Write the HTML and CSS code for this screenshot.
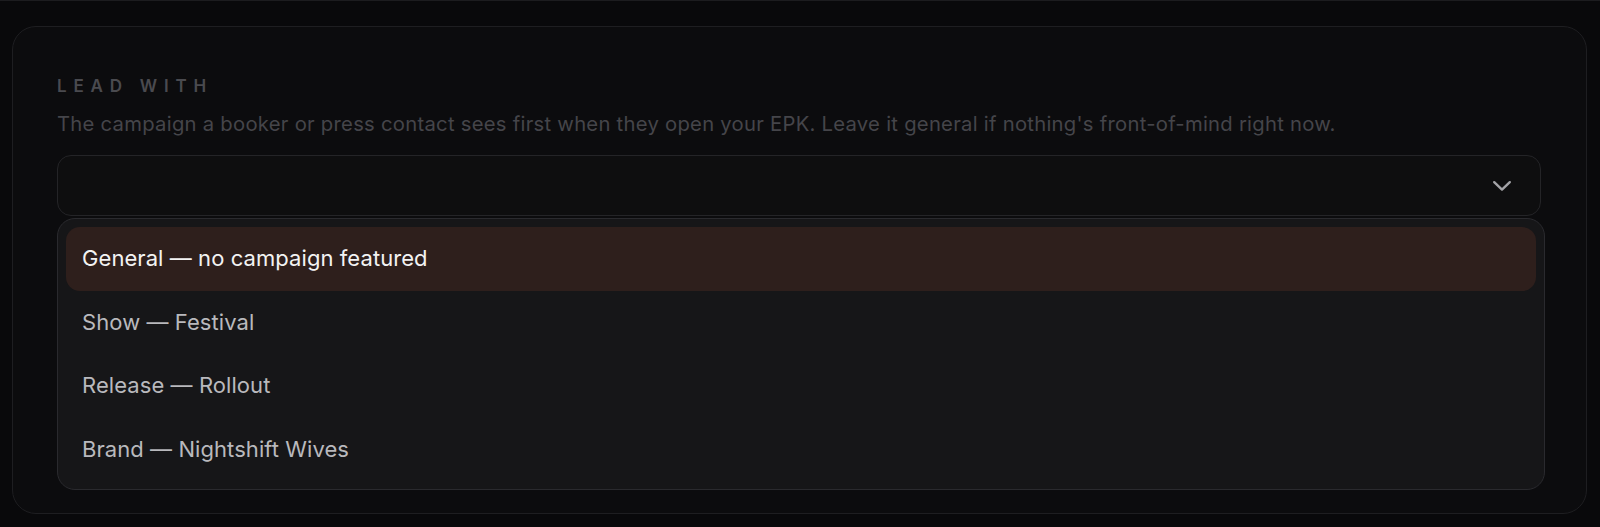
FILE: index.html
```html
<!DOCTYPE html>
<html lang="en">
<head>
<meta charset="utf-8">
<title>Lead with</title>
<link rel="stylesheet" href="styles.css">
</head>
<body>
  <section class="card">
    <div class="eyebrow">LEAD WITH</div>
    <p class="desc">The campaign a booker or press contact sees first when they open your EPK. Leave it general if nothing's front-of-mind right now.</p>
    <div class="select">
      <span class="select-value"></span>
      <svg class="chevron" width="20" height="12" viewBox="0 0 20 12" aria-hidden="true">
        <polyline points="2.2,2.2 10,9.6 17.8,2.2" fill="none" stroke="currentColor" stroke-width="2.4" stroke-linecap="round" stroke-linejoin="round"/>
      </svg>
    </div>
    <ul class="menu" role="listbox">
      <li class="option is-active" role="option" aria-selected="true">General — no campaign featured</li>
      <li class="option" role="option">Show — Festival</li>
      <li class="option" role="option">Release — Rollout</li>
      <li class="option" role="option">Brand — Nightshift Wives</li>
    </ul>
  </section>
</body>
</html>
```

FILE: styles.css
```css
* { box-sizing: border-box; }

html, body { height: 100%; }

body {
  margin: 0;
  background: #09090b;
  border-top: 1px solid #1c1c1f;
  padding: 25px 13px 0 12px;
  font-family: Inter, "Noto Sans", "Liberation Sans", sans-serif;
  -webkit-font-smoothing: antialiased;
}

.card {
  background: #0c0c0e;
  border: 1px solid #1e1e21;
  border-radius: 24px;
  padding: 49px 45px 23px 44px;
}

.eyebrow {
  font-size: 17px;
  line-height: 20px;
  font-weight: 600;
  letter-spacing: 0.4em;
  color: #4a4a4f;
}

.desc {
  margin: 14px 0 0;
  font-size: 20.25px;
  line-height: 28px;
  letter-spacing: 0.26px;
  color: #45454a;
}

.select {
  margin-top: 17px;
  height: 61px;
  background: #0e0e0f;
  border: 1px solid #242427;
  border-radius: 14px;
  display: flex;
  align-items: center;
  justify-content: space-between;
  padding: 0 28px 0 22px;
}

.chevron {
  color: #a3a3a7;
  display: block;
}

.menu {
  list-style: none;
  margin: 2px -4px 0 0;
  padding: 8px;
  background: #161618;
  border: 1px solid #2a2a2e;
  border-radius: 18px;
}

.option {
  height: 63.5px;
  line-height: 63.5px;
  padding: 0 16px;
  font-size: 22px;
  letter-spacing: 0.07px;
  color: #b9b9bd;
  border-radius: 14px;
  white-space: nowrap;
}

.option.is-active {
  background: #2e1f1c;
  color: #f3f3f3;
}
```
